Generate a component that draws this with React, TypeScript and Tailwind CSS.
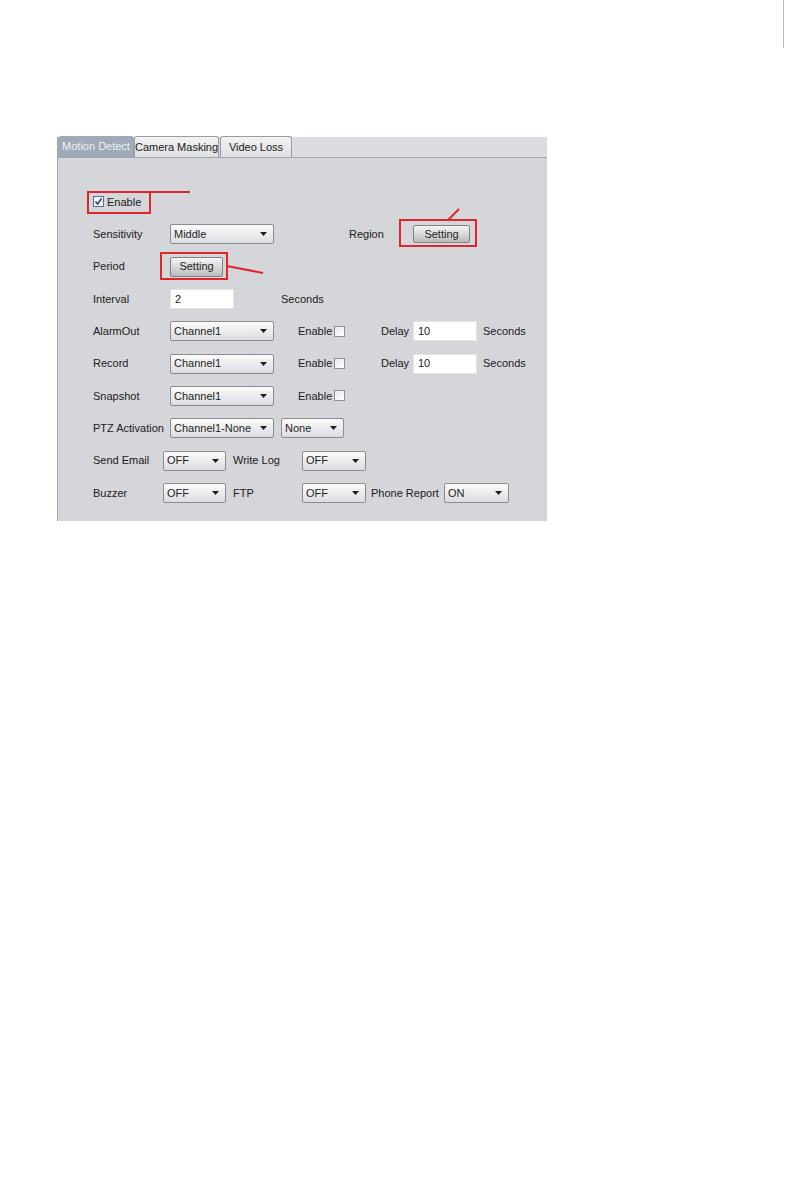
const Select = ({ value, w }: { value: string; w: string }) => (
  <div
    className={`${w} h-[20px] shrink-0 flex items-center justify-between pl-[3px] pr-[6px] rounded-[2px] border border-[#8a8c90] bg-gradient-to-b from-[#fbfbfb] to-[#dcdde0] text-[#1e1e1e]`}
  >
    <span className="whitespace-nowrap">{value}</span>
    <svg width="7" height="4" viewBox="0 0 7 4" aria-hidden="true">
      <polygon points="0,0 7,0 3.5,4" fill="#1e1e1e" />
    </svg>
  </div>
);

const TextBox = ({ value, w }: { value: string; w: string }) => (
  <div className={`${w} h-[20px] shrink-0 flex items-center pl-[4px] bg-white border border-[#e4e4e4]`}>
    {value}
  </div>
);

const Box = ({ checked = false }: { checked?: boolean }) => (
  <span
    className={`w-[11px] h-[11px] shrink-0 flex items-center justify-center border ${
      checked ? "border-[#5a6e96] bg-[#eef2fa]" : "border-[#8e9094] bg-gradient-to-br from-[#e6e6e6] to-[#ffffff]"
    }`}
  >
    {checked && (
      <svg width="9" height="9" viewBox="0 0 9 9" aria-hidden="true">
        <polyline points="1.5,4.5 3.6,7 7.5,1.5" fill="none" stroke="#2c3f70" strokeWidth="1.5" />
      </svg>
    )}
  </span>
);

const Btn = ({ w, h }: { w: string; h: string }) => (
  <div
    className={`${w} ${h} shrink-0 flex items-center justify-center rounded-[2px] border border-[#7f8185] bg-gradient-to-b from-[#f4f4f4] via-[#dadada] to-[#b9babc] text-[#1e1e1e]`}
  >
    Setting
  </div>
);

const Row = ({ children }: { children: React.ReactNode }) => (
  <div className="h-[32.33px] flex items-center whitespace-nowrap">{children}</div>
);

const DelayGroup = () => (
  <>
    <span className="w-[24px] shrink-0" />
    <span className="w-[36px] shrink-0">Enable</span>
    <Box />
    <span className="w-[36px] shrink-0" />
    <span className="w-[32px] shrink-0">Delay</span>
    <TextBox value="10" w="w-[64px]" />
    <span className="ml-[6px]">Seconds</span>
  </>
);

export default function App() {
  return (
    <div className="relative w-[805px] h-[1191px] bg-white font-['Liberation_Sans',Arial,sans-serif] text-[11px] text-[#202020]">
      {/* page edge mark */}
      <div className="absolute left-[783px] top-0 w-px h-[48px] bg-[#b8b8b8]" />

      <div className="pt-[137px] pl-[57px]">
        <div className="w-[490px] h-[384px] bg-[#d5d6da] border-l border-[#a4a6aa] flex flex-col">
          {/* tabs */}
          <div className="h-[21px] flex items-end border-b border-[#a2a5aa] bg-[#dcdde0] text-[11px] whitespace-nowrap">
            <div className="h-[21px] w-[76px] shrink-0 flex items-center justify-center rounded-t-[3px] bg-[#9fa9b7] text-[#eef1f4]">
              Motion Detect
            </div>
            <div className="h-[21px] w-[85px] shrink-0 flex items-center justify-center rounded-t-[3px] border border-b-0 border-[#9a9ca0] bg-gradient-to-b from-[#f3f3f3] to-[#dedfe2]">
              Camera Masking
            </div>
            <div className="h-[21px] w-[72px] shrink-0 ml-px flex items-center justify-center rounded-t-[3px] border border-b-0 border-[#9a9ca0] bg-gradient-to-b from-[#f3f3f3] to-[#dedfe2]">
              Video Loss
            </div>
          </div>

          <div className="pt-[27.8px] pl-[35px]">
            <Row>
              <Box checked />
              <span className="ml-[3px]">Enable</span>
            </Row>
            <Row>
              <span className="w-[77px] shrink-0">Sensitivity</span>
              <Select value="Middle" w="w-[104px]" />
              <span className="w-[75px] shrink-0" />
              <span className="w-[64px] shrink-0">Region</span>
              <Btn w="w-[57px]" h="h-[18px]" />
            </Row>
            <Row>
              <span className="w-[77px] shrink-0">Period</span>
              <Btn w="w-[53px]" h="h-[20px]" />
            </Row>
            <Row>
              <span className="w-[77px] shrink-0">Interval</span>
              <TextBox value="2" w="w-[64px]" />
              <span className="ml-[47px]">Seconds</span>
            </Row>
            <Row>
              <span className="w-[77px] shrink-0">AlarmOut</span>
              <Select value="Channel1" w="w-[104px]" />
              <DelayGroup />
            </Row>
            <Row>
              <span className="w-[77px] shrink-0">Record</span>
              <Select value="Channel1" w="w-[104px]" />
              <DelayGroup />
            </Row>
            <Row>
              <span className="w-[77px] shrink-0">Snapshot</span>
              <Select value="Channel1" w="w-[104px]" />
              <span className="w-[24px] shrink-0" />
              <span className="w-[36px] shrink-0">Enable</span>
              <Box />
            </Row>
            <Row>
              <span className="w-[77px] shrink-0">PTZ Activation</span>
              <Select value="Channel1-None" w="w-[104px]" />
              <span className="w-[7px] shrink-0" />
              <Select value="None" w="w-[63px]" />
            </Row>
            <Row>
              <span className="w-[70px] shrink-0">Send Email</span>
              <Select value="OFF" w="w-[63px]" />
              <span className="ml-[7px] w-[69px] shrink-0">Write Log</span>
              <Select value="OFF" w="w-[64px]" />
            </Row>
            <Row>
              <span className="w-[70px] shrink-0">Buzzer</span>
              <Select value="OFF" w="w-[63px]" />
              <span className="ml-[7px] w-[69px] shrink-0">FTP</span>
              <Select value="OFF" w="w-[64px]" />
              <span className="ml-[5px] w-[73px] shrink-0">Phone Report</span>
              <Select value="ON" w="w-[65px]" />
            </Row>
          </div>
        </div>
      </div>

      {/* red callouts */}
      <svg className="absolute left-0 top-0" width="805" height="600" aria-hidden="true">
        <g fill="none" stroke="#e0262c" strokeWidth="2">
          <rect x="88" y="192" width="62" height="21" />
          <line x1="150" y1="192" x2="190" y2="192" />
          <rect x="400" y="220" width="76" height="26" />
          <line x1="448" y1="220" x2="459" y2="209" />
          <rect x="161" y="253" width="66" height="26" />
          <line x1="227" y1="266" x2="263" y2="273" />
        </g>
      </svg>
    </div>
  );
}
